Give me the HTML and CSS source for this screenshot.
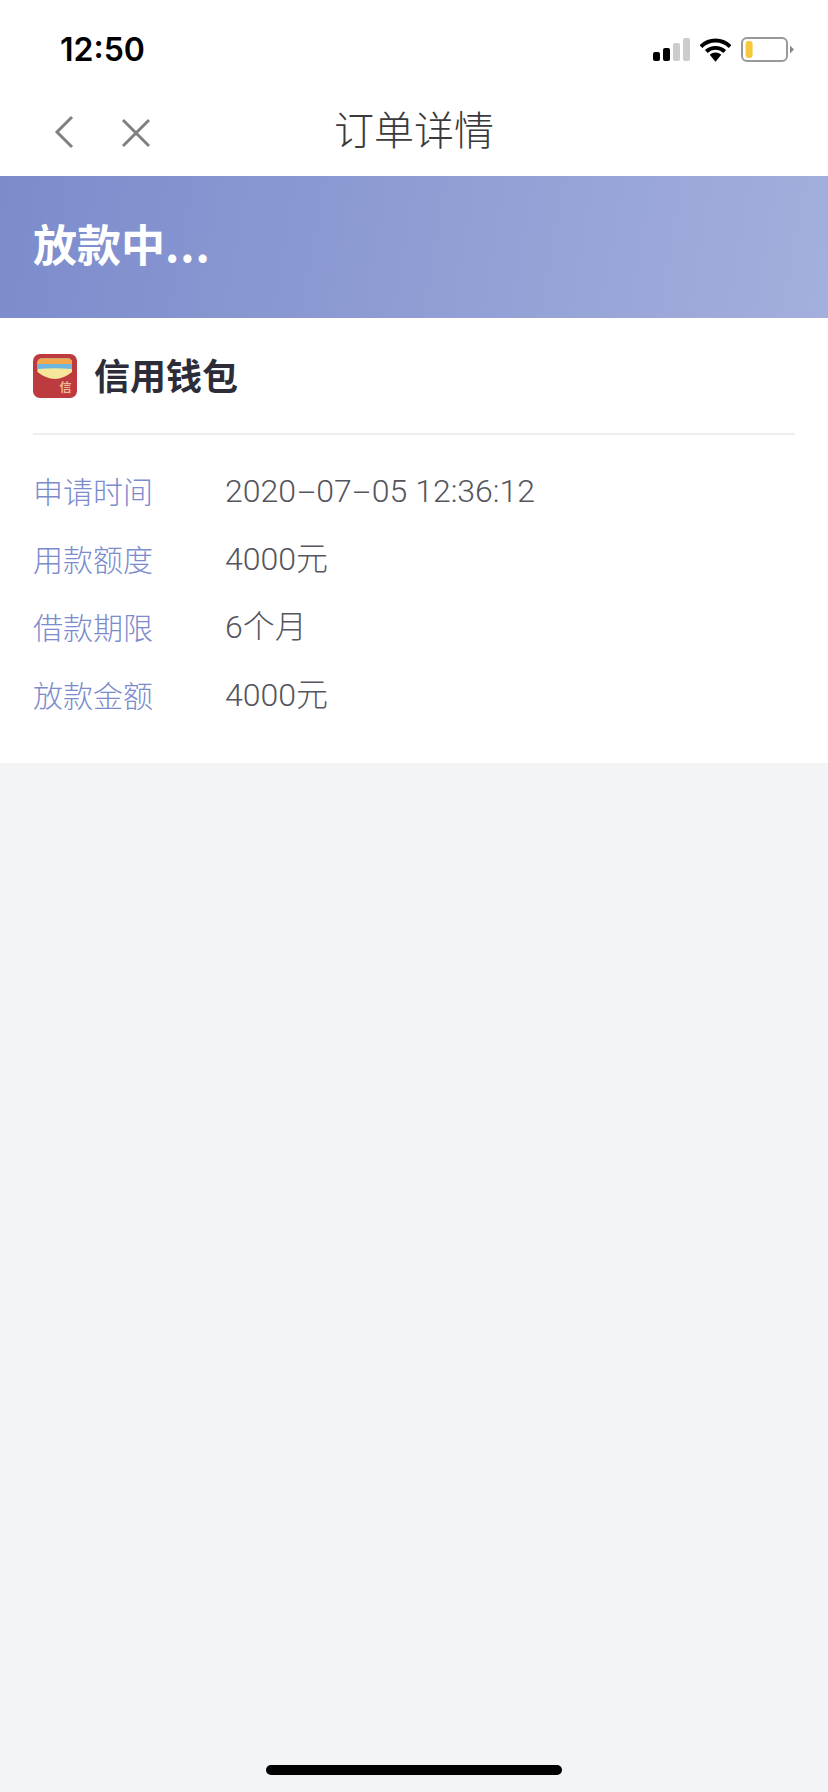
FILE: index.html
```html
<!DOCTYPE html>
<html lang="zh-CN">

<head>
    <meta charset="UTF-8" />
    <meta name="viewport" content="width=device-width, initial-scale=1.0" />
    <title>订单详情</title>
    <link rel="stylesheet" href="styles.css">
</head>

<body>
    <div class="page">
        <div class="status-bar">
            <span class="clock">12:50</span>
            <div class="status-icons">
                <svg class="signal" width="37" height="24" viewBox="0 0 37 24">
                    <rect x="0" y="14" width="7" height="9" rx="2" fill="#000" />
                    <rect x="10" y="10" width="7" height="13" rx="2" fill="#000" />
                    <rect x="20" y="5" width="7" height="18" rx="2" fill="#ccc" />
                    <rect x="30" y="0" width="7" height="23" rx="2" fill="#ccc" />
                </svg>
                <svg class="wifi" width="31" height="24" viewBox="0 0 32 24">
                    <path d="M1 8.500 A21 21 0 0 1 31 8.500" fill="none" stroke="#000" stroke-width="4" />
                    <path d="M6.500 13.500 A14 14 0 0 1 25.500 13.500" fill="none" stroke="#000" stroke-width="4" />
                    <path d="M10 17 A9 9 0 0 1 22 17 L16 24 Z" fill="#000" />
                </svg>
                <svg class="battery" width="53" height="26" viewBox="0 0 53 26">
                    <rect x="1" y="1" width="45" height="23" rx="5" fill="#fff" stroke="#999" stroke-width="2" />
                    <rect x="4.600" y="4" width="7" height="17" rx="3" fill="#f6c93d" />
                    <path d="M49 8.500 L53 12.500 L49 16.500 Z" fill="#888" />
                </svg>
            </div>
        </div>

        <div class="nav-bar">
            <svg class="nav-back" width="20" height="34" viewBox="0 0 20 34">
                <path d="M18 2 L3 17 L18 32" fill="none" stroke="#808080" stroke-width="3" />
            </svg>
            <svg class="nav-close" width="30" height="30" viewBox="0 0 30 30">
                <path d="M2 2 L28 28 M28 2 L2 28" fill="none" stroke="#808080" stroke-width="3" />
            </svg>
            <h1 class="nav-title">订单详情</h1>
        </div>

        <div class="banner">放款中<span class="dots">...</span></div>

        <div class="card">
            <div class="lender">
                <svg class="lender-logo" width="44" height="44" viewBox="0 0 44 44">
                    <rect width="44" height="44" rx="7" fill="#bd3b3e" />
                    <path d="M4.500 9 Q4.500 4.500 9 4.500 H35 Q39 4.500 39 9 V18 Q22 32 4.500 18 Z" fill="#f7e79b" />
                    <path d="M4.500 9 Q4.500 4.500 9 4.500 H35 Q39 4.500 39 9 V15 Q22 13.500 4.500 15 Z" fill="#6db7e0" />
                    <path d="M4.500 9 Q4.500 4.500 9 4.500 H35 Q39 4.500 39 9 V10 H4.500 Z" fill="#f3a94c" />
                    <text class="logo-char" x="26.500" y="38">信</text>
                </svg>
                <span class="lender-name">信用钱包</span>
            </div>
            <div class="rows">
                <div class="row"><span class="row-label">申请时间</span><span class="row-value">2020<span class="dash">-</span>07<span class="dash">-</span>05 12:36:12</span></div>
                <div class="row"><span class="row-label">用款额度</span><span class="row-value">4000元</span></div>
                <div class="row"><span class="row-label">借款期限</span><span class="row-value">6个月</span></div>
                <div class="row"><span class="row-label">放款金额</span><span class="row-value">4000元</span></div>
            </div>
        </div>

        <div class="home-bar"></div>
    </div>
</body>

</html>
```

FILE: styles.css
```css
* {
    box-sizing: border-box;
}

html,
body {
    margin: 0;
    padding: 0;
}

body {
    background-color: #f3f4f6;
    font-family: "Noto Sans CJK SC", "Noto Sans", sans-serif;
}

.page {
    position: relative;
    width: 828px;
    height: 1792px;
    overflow: hidden;
}

.status-bar {
    display: flex;
    justify-content: space-between;
    align-items: center;
    height: 88px;
    padding: 11px 34px 0 60px;
    background-color: #fff;
}

.clock {
    font-family: "Inter", "Liberation Sans", sans-serif;
    font-size: 32px;
    font-weight: 600;
    color: #000;
}

.status-icons {
    display: flex;
    align-items: center;
    gap: 10px;
}

.nav-bar {
    display: flex;
    align-items: center;
    position: relative;
    height: 88px;
    padding-left: 54px;
    background-color: #fff;
}

.nav-close {
    margin-left: 47px;
    margin-top: 2px;
}

.nav-title {
    position: absolute;
    left: 0;
    right: 0;
    margin: 0;
    padding-bottom: 8px;
    text-align: center;
    font-size: 40px;
    font-weight: 300;
    color: #3a3a3c;
}

.banner {
    display: flex;
    align-items: center;
    height: 142px;
    padding: 0 0 8px 33px;
    background: linear-gradient(100deg, #7c8bcc 0%, #a3afdc 100%);
    color: #fff;
    font-size: 44px;
    font-weight: 700;
}

.dots {
    letter-spacing: 1px;
}

.card {
    height: 445px;
    padding: 0 33px;
    background-color: #fff;
}

.lender {
    display: flex;
    align-items: center;
    gap: 17px;
    height: 117px;
    border-bottom: 2px solid #eeeef1;
}

.logo-char {
    font-size: 12px;
    font-weight: 700;
    fill: #f0b896;
}

.lender-name {
    padding-bottom: 4px;
    font-size: 36px;
    font-weight: 700;
    color: #2d2d3a;
}

.rows {
    padding-top: 21px;
}

.row {
    display: flex;
    align-items: center;
    height: 68px;
    font-weight: 300;
}

.row-label {
    width: 192px;
    font-size: 30px;
    color: #7c8bcc;
}

.row-value {
    padding-top: 2px;
    font-family: "Roboto", "Noto Sans CJK SC", sans-serif;
    font-size: 32px;
    line-height: 40px;
    color: #55555e;
}

.dash {
    display: inline-block;
    margin: 0 5.500px;
    transform: scaleX(2);
}

.home-bar {
    position: absolute;
    left: 266px;
    bottom: 17px;
    width: 296px;
    height: 10px;
    border-radius: 5px;
    background-color: #000;
}
```
